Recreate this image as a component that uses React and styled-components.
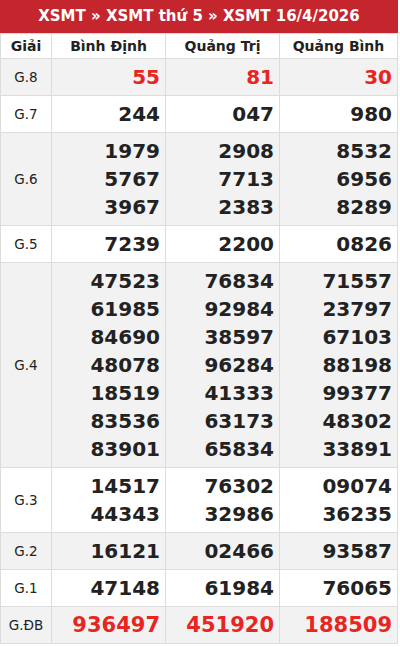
import styled, { createGlobalStyle } from 'styled-components'

const GlobalStyle = createGlobalStyle`
  html, body {
    margin: 0;
    padding: 0;
    background: #fff;
    font-family: "DejaVu Sans", "Liberation Sans", sans-serif;
  }
`

const provinces = ['Bình Định', 'Quảng Trị', 'Quảng Bình']

const rows = [
  { name: 'G.8', red: true, values: [['55'], ['81'], ['30']] },
  { name: 'G.7', values: [['244'], ['047'], ['980']] },
  { name: 'G.6', values: [['1979', '5767', '3967'], ['2908', '7713', '2383'], ['8532', '6956', '8289']] },
  { name: 'G.5', values: [['7239'], ['2200'], ['0826']] },
  {
    name: 'G.4',
    values: [
      ['47523', '61985', '84690', '48078', '18519', '83536', '83901'],
      ['76834', '92984', '38597', '96284', '41333', '63173', '65834'],
      ['71557', '23797', '67103', '88198', '99377', '48302', '33891'],
    ],
  },
  { name: 'G.3', values: [['14517', '44343'], ['76302', '32986'], ['09074', '36235']] },
  { name: 'G.2', values: [['16121'], ['02466'], ['93587']] },
  { name: 'G.1', values: [['47148'], ['61984'], ['76065']] },
  { name: 'G.ĐB', red: true, big: true, values: [['936497'], ['451920'], ['188509']] },
]

const App = () => {
  return (
    <>
      <GlobalStyle />
      <Wrap>
        <Title>XSMT » XSMT thứ 5 » XSMT 16/4/2026</Title>
        <Table>
          <colgroup>
            <col style={{ width: 51 }} />
            <col style={{ width: 114 }} />
            <col style={{ width: 114 }} />
            <col />
          </colgroup>
          <thead>
            <tr>
              <Head>Giải</Head>
              {provinces.map((p) => (
                <Head key={p}>{p}</Head>
              ))}
            </tr>
          </thead>
          <tbody>
            {rows.map((r, i) => (
              <Row key={r.name} $shade={i % 2 === 0}>
                <Prize>{r.name}</Prize>
                {r.values.map((list, j) => (
                  <Numbers key={j} $red={r.red} $big={r.big}>
                    {list.map((n) => (
                      <div key={n}>{n}</div>
                    ))}
                  </Numbers>
                ))}
              </Row>
            ))}
          </tbody>
        </Table>
      </Wrap>
    </>
  )
}

export default App

const Wrap = styled.div`
  width: 398px;
`

const Title = styled.h2`
  margin: 0;
  height: 33px;
  line-height: 32px;
  background: #c5252d;
  color: #fff;
  font-size: 15px;
  font-weight: 700;
  text-align: center;
`

const Table = styled.table`
  width: 398px;
  border-collapse: collapse;
  table-layout: fixed;
  border: 1px solid #dcdcdc;
`

const Head = styled.th`
  height: 24px;
  padding: 0;
  font-size: 14px;
  font-weight: 700;
  color: #222;
  text-align: center;
  border: 1px solid #dcdcdc;
  background: #fff;
`

const Row = styled.tr`
  background: ${(p) => (p.$shade ? '#f2f2f2' : '#fff')};
`

const Prize = styled.td`
  padding: 0;
  font-size: 13.5px;
  color: #222;
  text-align: center;
  border: 1px solid #dcdcdc;
`

const Numbers = styled.td`
  padding: 4px 5px 4px 0;
  text-align: right;
  font-weight: 700;
  font-size: ${(p) => (p.$big ? '21px' : '20px')};
  line-height: 28px;
  color: ${(p) => (p.$red ? '#e8251f' : '#222')};
  border: 1px solid #dcdcdc;
`
